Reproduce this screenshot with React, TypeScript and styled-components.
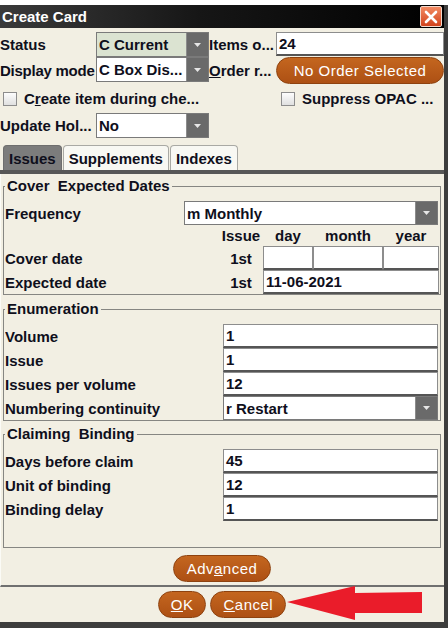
import React from "react";
import styled, { createGlobalStyle } from "styled-components";

const Global = createGlobalStyle`
  html, body { margin: 0; padding: 0; background: #ffffff; }
  body { font-family: "Liberation Sans", Arial, sans-serif; }
  * { box-sizing: border-box; }
`;

const Window = styled.div`
  margin-top: 5px;
  width: 448px;
  height: 623px;
  background: #f2efe3;
  border-right: 4px solid #3d3d3d;
  border-bottom: 6px solid #3d3d3d;
  display: flex;
  flex-direction: column;
  color: #0f0f1c;
  font: bold 15px "Liberation Sans", Arial, sans-serif;
`;

const TitleBar = styled.div`
  height: 23px;
  flex: none;
  display: flex;
  align-items: center;
  justify-content: space-between;
  padding-left: 2px;
  background: linear-gradient(90deg, #3a3a3a 0%, #161616 45%, #000 100%);
`;

const Title = styled.span`
  color: #ffffff;
  font-weight: bold;
  font-size: 15px;
`;

const CloseButton = styled.div`
  width: 22px;
  height: 21px;
  margin-right: 2px;
  border: 1px solid #f3d8cc;
  border-radius: 2px;
  background: linear-gradient(#f28a62, #d2431c);
  display: flex;
  align-items: center;
  justify-content: center;
`;

const TopGrid = styled.div`
  margin-top: 4px;
  display: grid;
  grid-template-columns: 96px 113px 67px 168px;
  grid-template-rows: 25px 27px;
`;

const Label = styled.div<{ $tight?: boolean }>`
  display: flex;
  align-items: center;
  white-space: nowrap;
  overflow: hidden;
  letter-spacing: ${(p) => (p.$tight ? "-0.25px" : "normal")};
`;

const Combo = styled.div<{ $bg?: string }>`
  display: flex;
  height: 100%;
  max-height: 25px;
  border: 1px solid #7a7a7a;
  background: ${(p) => p.$bg || "#ffffff"};
`;

const ComboText = styled.div`
  flex: 1;
  display: flex;
  align-items: center;
  padding-left: 2px;
  white-space: nowrap;
  overflow: hidden;
`;

const DropBtn = styled.div`
  width: 22px;
  flex: none;
  background: #6a6a6a;
  border-left: 1px solid #8c8c8c;
  display: flex;
  align-items: center;
  justify-content: center;
`;

const Field = styled.div`
  height: 24px;
  background: #ffffff;
  border: 1px solid #8d8d8d;
  border-bottom: 2px solid #555555;
  display: flex;
  align-items: center;
  padding-left: 2px;
  white-space: nowrap;
`;

const PillButton = styled.div<{ $pad?: number }>`
  height: 27px;
  border-radius: 14px;
  border: 1px solid #8e420f;
  background: linear-gradient(#c4661f, #ad5014);
  color: #ffffff;
  font-weight: normal;
  font-size: 15px;
  letter-spacing: 0.5px;
  display: flex;
  align-items: center;
  justify-content: center;
  padding: 0 ${(p) => p.$pad ?? 12}px;
  white-space: nowrap;
`;

const CheckRow = styled.div`
  height: 29px;
  display: grid;
  grid-template-columns: 281px 1fr;
  align-items: center;
`;

const CheckItem = styled.div<{ $indent?: number }>`
  display: flex;
  align-items: center;
  gap: 7px;
  padding-left: ${(p) => p.$indent ?? 0}px;
  white-space: nowrap;
`;

const Box = styled.span`
  width: 14px;
  height: 14px;
  flex: none;
  border: 1px solid #8d8d8d;
  background: linear-gradient(#fdfdfd, #e0e0e0);
`;

const SingleRow = styled.div`
  height: 25px;
  display: grid;
  grid-template-columns: 96px 113px;
  margin-bottom: 7px;
`;

const TabBar = styled.div`
  height: 25px;
  flex: none;
  display: flex;
  gap: 1px;
  padding-left: 3px;
`;

const Tab = styled.div<{ $active?: boolean }>`
  height: 25px;
  padding: 0 5px;
  display: flex;
  align-items: center;
  border: 1px solid ${(p) => (p.$active ? "#6e6e6e" : "#a9a9a4")};
  border-bottom: none;
  border-radius: 4px 4px 0 0;
  background: ${(p) => (p.$active ? "#7c7c7c" : "#f8f8f3")};
`;

const TabLine = styled.div`
  height: 4px;
  flex: none;
  background: #575757;
`;

const Panel = styled.div`
  flex: 1;
  display: flex;
  flex-direction: column;
  padding: 4px 3px 0 2px;
  border-bottom: 2px solid #707070;
  border-left: 1px solid #fbfbf6;
`;

const Group = styled.fieldset<{ $mb?: number; $pb?: number }>`
  margin: 0 0 ${(p) => p.$mb ?? 0}px 0;
  padding: 7px 2px ${(p) => p.$pb ?? 0}px 1px;
  border: 1px solid #868682;
  min-width: 0;
`;

const Legend = styled.legend`
  padding: 0 2px;
  line-height: 16px;
  font-weight: bold;
  font-size: 15px;
  white-space: pre;
`;

const FreqRow = styled.div`
  display: flex;
  height: 24px;
`;

const FreqLabel = styled(Label)`
  width: 179px;
  flex: none;
`;

const Grow = styled.div`
  flex: 1;
`;

const DatesGrid = styled.div`
  display: grid;
  grid-template-columns: 214px 44px 50px 70px 56px;
  grid-template-rows: 21px 24px 24px;
`;

const Center = styled.div`
  display: flex;
  align-items: center;
  justify-content: center;
`;

const SpanField = styled(Field)`
  grid-column: 3 / 6;
`;

const FormGrid = styled.div`
  display: grid;
  grid-template-columns: 218px 1fr;
  grid-auto-rows: 24px;
`;

const AdvancedRow = styled.div`
  display: flex;
  justify-content: center;
  margin-top: 7px;
`;

const BottomBar = styled.div`
  height: 35px;
  flex: none;
  display: flex;
  justify-content: center;
  gap: 4px;
  padding-top: 4px;
  position: relative;
`;

const Arrow = styled.svg`
  position: absolute;
  left: 287px;
  top: -1px;
`;

const Down = () => (
  <svg width="9" height="6" viewBox="0 0 9 6">
    <path d="M1 1 H8 L4.5 5 Z" fill="#e6e6e6" />
  </svg>
);

const Select = ({ text, bg }: { text: string; bg?: string }) => (
  <Combo $bg={bg}>
    <ComboText>{text}</ComboText>
    <DropBtn>
      <Down />
    </DropBtn>
  </Combo>
);

export default function App() {
  return (
    <>
      <Global />
      <Window>
        <TitleBar>
          <Title>Create Card</Title>
          <CloseButton>
            <svg width="14" height="14" viewBox="0 0 14 14">
              <path d="M2 2 L12 12 M12 2 L2 12" stroke="#ffffff" strokeWidth="2.6" strokeLinecap="round" />
            </svg>
          </CloseButton>
        </TitleBar>

        <TopGrid>
          <Label>Status</Label>
          <Select text="C Current" bg="#dbe3d1" />
          <Label>Items o...</Label>
          <Field>24</Field>
          <Label $tight>Display mode</Label>
          <Select text="C Box Dis..." />
          <Label>
            <u>O</u>rder r...
          </Label>
          <PillButton>No Order Selected</PillButton>
        </TopGrid>

        <CheckRow>
          <CheckItem $indent={3}>
            <Box />
            <span>
              C<u>r</u>eate item during che...
            </span>
          </CheckItem>
          <CheckItem>
            <Box />
            <span>Suppress OPAC ...</span>
          </CheckItem>
        </CheckRow>

        <SingleRow>
          <Label>Update Hol...</Label>
          <Select text="No" />
        </SingleRow>

        <TabBar>
          <Tab $active>Issues</Tab>
          <Tab>Supplements</Tab>
          <Tab>Indexes</Tab>
        </TabBar>
        <TabLine />

        <Panel>
          <Group $mb={6}>
            <Legend>{"Cover  Expected Dates"}</Legend>
            <FreqRow>
              <FreqLabel>Frequency</FreqLabel>
              <Grow>
                <Select text="m Monthly" />
              </Grow>
            </FreqRow>
            <DatesGrid>
              <div />
              <Center>Issue</Center>
              <Center>day</Center>
              <Center>month</Center>
              <Center>year</Center>
              <Label>Cover date</Label>
              <Center>1st</Center>
              <Field />
              <Field />
              <Field />
              <Label>Expected date</Label>
              <Center>1st</Center>
              <SpanField>11-06-2021</SpanField>
            </DatesGrid>
          </Group>

          <Group $mb={5}>
            <Legend>Enumeration</Legend>
            <FormGrid>
              <Label>Volume</Label>
              <Field>1</Field>
              <Label>Issue</Label>
              <Field>1</Field>
              <Label>Issues per volume</Label>
              <Field>12</Field>
              <Label>Numbering continuity</Label>
              <Select text="r Restart" />
            </FormGrid>
          </Group>

          <Group $pb={26}>
            <Legend>{"Claiming  Binding"}</Legend>
            <FormGrid>
              <Label>Days before claim</Label>
              <Field>45</Field>
              <Label>Unit of binding</Label>
              <Field>12</Field>
              <Label>Binding delay</Label>
              <Field>1</Field>
            </FormGrid>
          </Group>

          <AdvancedRow>
            <PillButton $pad={13}>
              Adv<u>a</u>nced
            </PillButton>
          </AdvancedRow>
        </Panel>

        <BottomBar>
          <PillButton $pad={12}>
            <u>O</u>K
          </PillButton>
          <PillButton $pad={12}>
            <u>C</u>ancel
          </PillButton>
          <Arrow width="137" height="36" viewBox="0 0 137 36">
            <path d="M0 16 L68 0 L68 7 L135 6 L135 27 L68 27 L68 34 Z" fill="#ea1c2a" />
          </Arrow>
        </BottomBar>
      </Window>
    </>
  );
}
